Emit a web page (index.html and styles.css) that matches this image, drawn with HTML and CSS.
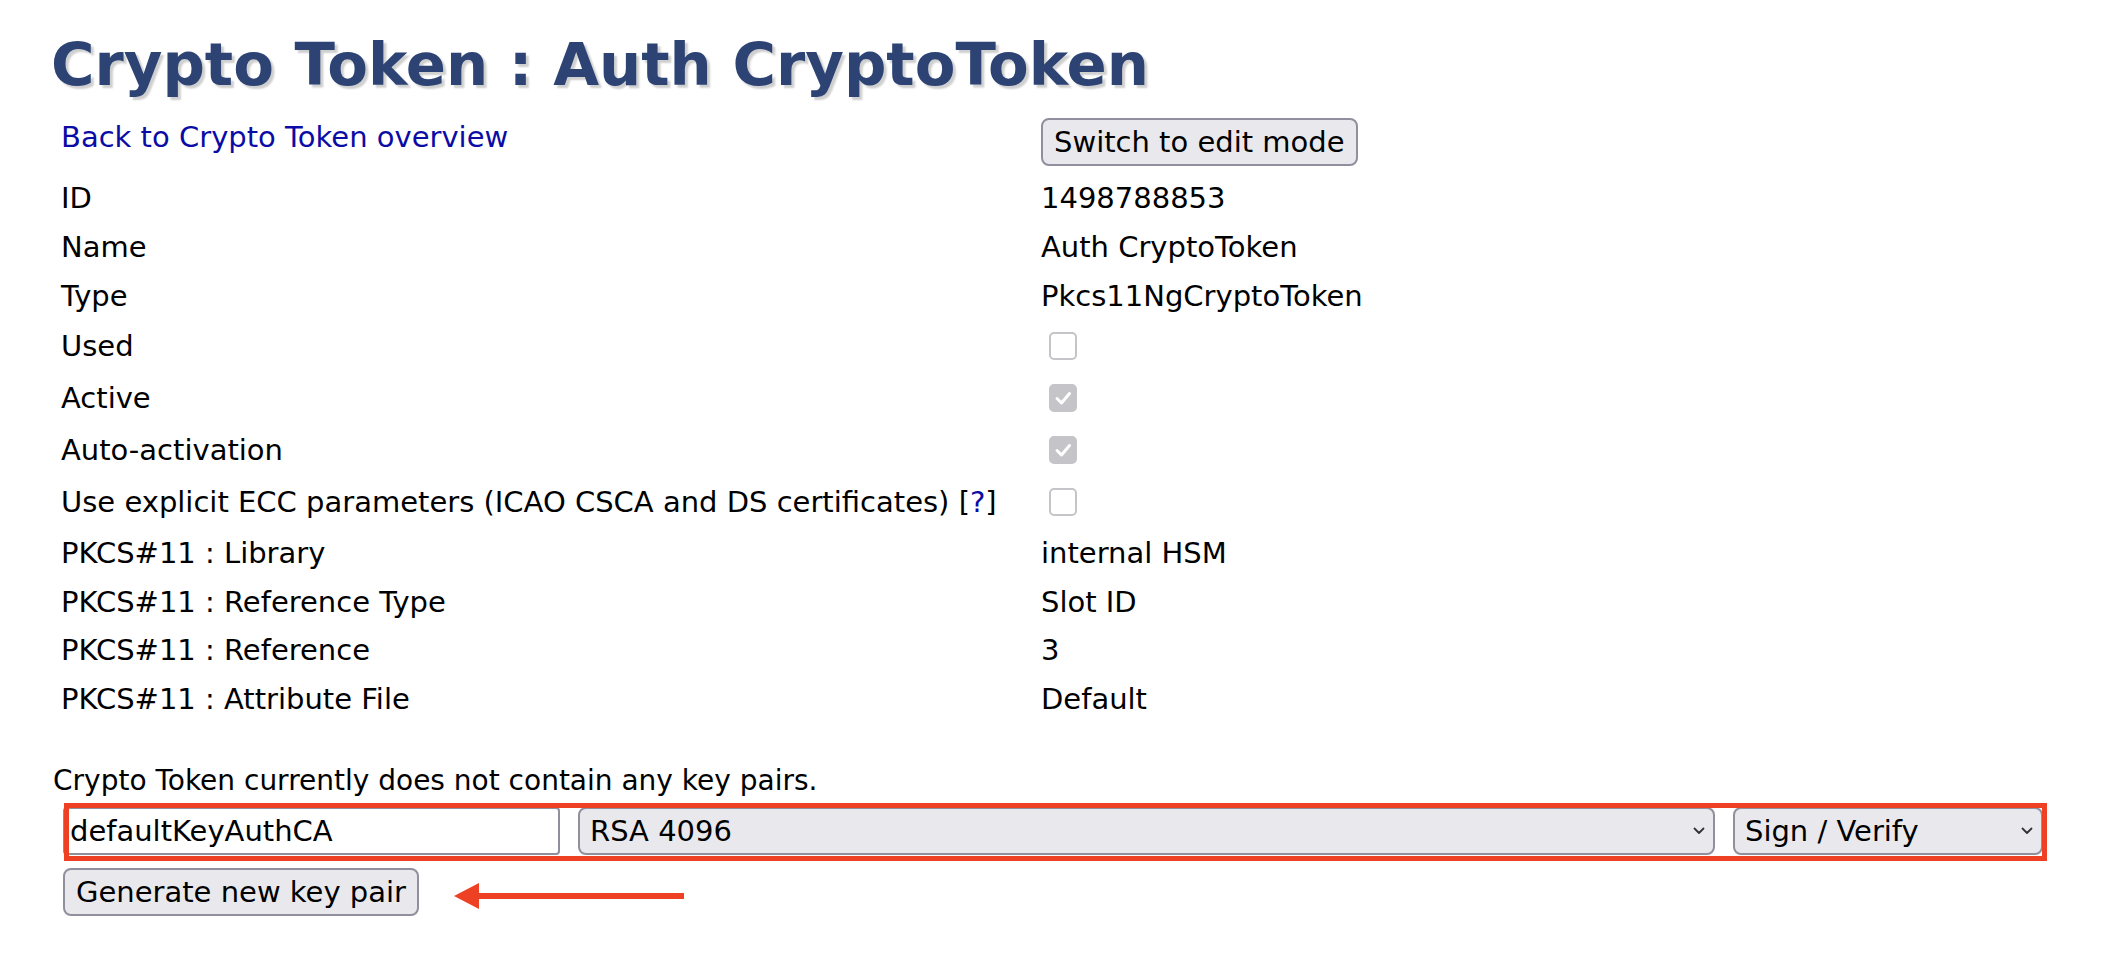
FILE: index.html
```html
<!DOCTYPE html>
<html lang="en">
<head>
<meta charset="utf-8">
<title>Crypto Token : Auth CryptoToken</title>
<link rel="stylesheet" href="styles.css">
</head>
<body>
<div class="page">
  <h1 class="title">Crypto Token : Auth CryptoToken</h1>

  <div class="props">
    <div class="row row-head">
      <div class="label"><a class="link" href="#">Back to Crypto Token overview</a></div>
      <div class="value"><button class="btn btn-switch" type="button">Switch to edit mode</button></div>
    </div>
    <div class="row"><div class="label">ID</div><div class="value">1498788853</div></div>
    <div class="row"><div class="label">Name</div><div class="value">Auth CryptoToken</div></div>
    <div class="row"><div class="label">Type</div><div class="value">Pkcs11NgCryptoToken</div></div>
    <div class="row row-cb"><div class="label">Used</div><div class="value"><span class="cb"></span></div></div>
    <div class="row row-cb"><div class="label">Active</div><div class="value"><span class="cb cb-on"><svg viewBox="0 0 28 28" class="tick"><polyline points="8,14.5 12.5,19 20.5,9.5"/></svg></span></div></div>
    <div class="row row-cb"><div class="label">Auto-activation</div><div class="value"><span class="cb cb-on"><svg viewBox="0 0 28 28" class="tick"><polyline points="8,14.5 12.5,19 20.5,9.5"/></svg></span></div></div>
    <div class="row row-cb"><div class="label">Use explicit ECC parameters (ICAO CSCA and DS certificates) [<a class="link" href="#">?</a>]</div><div class="value"><span class="cb"></span></div></div>
    <div class="row"><div class="label">PKCS#11 : Library</div><div class="value">internal HSM</div></div>
    <div class="row"><div class="label">PKCS#11 : Reference Type</div><div class="value">Slot ID</div></div>
    <div class="row"><div class="label">PKCS#11 : Reference</div><div class="value">3</div></div>
    <div class="row"><div class="label">PKCS#11 : Attribute File</div><div class="value">Default</div></div>
  </div>

  <p class="note">Crypto Token currently does not contain any key pairs.</p>

  <div class="keygen">
    <input class="field" type="text" value="defaultKeyAuthCA">
    <span class="select select-alg">
      <span class="select-text">RSA 4096</span>
      <svg class="chev" viewBox="0 0 12 8"><polyline points="1.5,1.5 6,6 10.5,1.5"/></svg>
    </span>
    <span class="select select-usage">
      <span class="select-text">Sign / Verify</span>
      <svg class="chev" viewBox="0 0 12 8"><polyline points="1.5,1.5 6,6 10.5,1.5"/></svg>
    </span>
    <div class="highlight"></div>
  </div>

  <div class="actions">
    <button class="btn btn-gen" type="button">Generate new key pair</button>
    <svg class="arrow" viewBox="0 0 232 28" width="232" height="28">
      <line x1="20" y1="14" x2="230" y2="14"/>
      <polygon points="0,14 25,1 25,27"/>
    </svg>
  </div>
</div>
</body>
</html>
```

FILE: styles.css
```css
html, body {
  margin: 0;
  padding: 0;
  background: #ffffff;
}

body {
  font-family: "DejaVu Sans", Verdana, sans-serif;
  font-size: 29px;
  color: #000000;
}

.page {
  padding-left: 51px;
}

.title {
  margin: 30px 0 0 0;
  font-size: 59.3px;
  line-height: 70px;
  font-weight: bold;
  color: #2c4374;
  text-shadow: 3px 3px 2px #cfcfcf;
}

.props {
  margin-top: 14px;
}

.row {
  display: grid;
  grid-template-columns: 980px 1fr;
  height: 48.8px;
  align-items: center;
}

.row-cb {
  height: 52px;
}

.row-head {
  height: 60px;
  align-items: start;
}

.label,
.value {
  padding-left: 10px;
  line-height: 34px;
  white-space: nowrap;
}

.row-head .label {
  padding-top: 6px;
}

.row-head .value {
  padding-top: 4px;
}

.link {
  color: #0b0ba6;
  text-decoration: none;
}

.btn {
  font-family: "DejaVu Sans", Verdana, sans-serif;
  font-size: 29px;
  color: #000000;
  background: #e9e9ed;
  border: 2px solid #8f8f9d;
  border-radius: 8px;
  height: 48px;
  padding: 0 11px;
  margin: 0;
  line-height: 44px;
}

.cb {
  display: block;
  box-sizing: border-box;
  width: 28px;
  height: 28px;
  margin-left: 8px;
  border: 2.5px solid #c4c4c9;
  border-radius: 5px;
  background: #ffffff;
}

.cb-on {
  background: #c4c4c9;
  border-color: #c4c4c9;
}

.tick {
  display: block;
  width: 28px;
  height: 28px;
  margin: -2.5px;
}

.tick polyline {
  fill: none;
  stroke: #ffffff;
  stroke-width: 3;
  stroke-linecap: round;
  stroke-linejoin: round;
}

.note {
  margin: 41px 0 0 2px;
  font-size: 28px;
  line-height: 32px;
}

.keygen {
  position: relative;
  display: flex;
  align-items: center;
  gap: 18px;
  margin-top: 10px;
  margin-left: 12px;
  width: 1980px;
}

.field {
  box-sizing: border-box;
  width: 497px;
  height: 48px;
  margin: 0;
  padding: 0 5px;
  font-family: "DejaVu Sans", Verdana, sans-serif;
  font-size: 29px;
  color: #000000;
  background: #ffffff;
  border: 2px solid #8f8f9d;
  border-radius: 4px;
}

.select {
  position: relative;
  box-sizing: border-box;
  display: flex;
  align-items: center;
  height: 48px;
  padding: 0 10px;
  background: #e9e9ed;
  border: 2px solid #8f8f9d;
  border-radius: 8px;
}

.select-alg {
  width: 1137px;
}

.select-usage {
  width: 310px;
}

.select-text {
  flex: 1;
  white-space: nowrap;
}

.chev {
  width: 12px;
  height: 8px;
  margin-right: -2px;
}

.chev polyline {
  fill: none;
  stroke: #333333;
  stroke-width: 1.8;
  stroke-linecap: round;
  stroke-linejoin: round;
}

.highlight {
  position: absolute;
  left: 1px;
  top: -4px;
  width: 1983px;
  height: 58px;
  box-sizing: border-box;
  border: 5px solid #ee4124;
  pointer-events: none;
}

.actions {
  display: flex;
  align-items: center;
  margin-top: 13px;
  margin-left: 12px;
}

.arrow {
  margin-left: 35px;
  margin-top: 8px;
}

.arrow line {
  stroke: #ee4124;
  stroke-width: 6;
}

.arrow polygon {
  fill: #ee4124;
}
```
